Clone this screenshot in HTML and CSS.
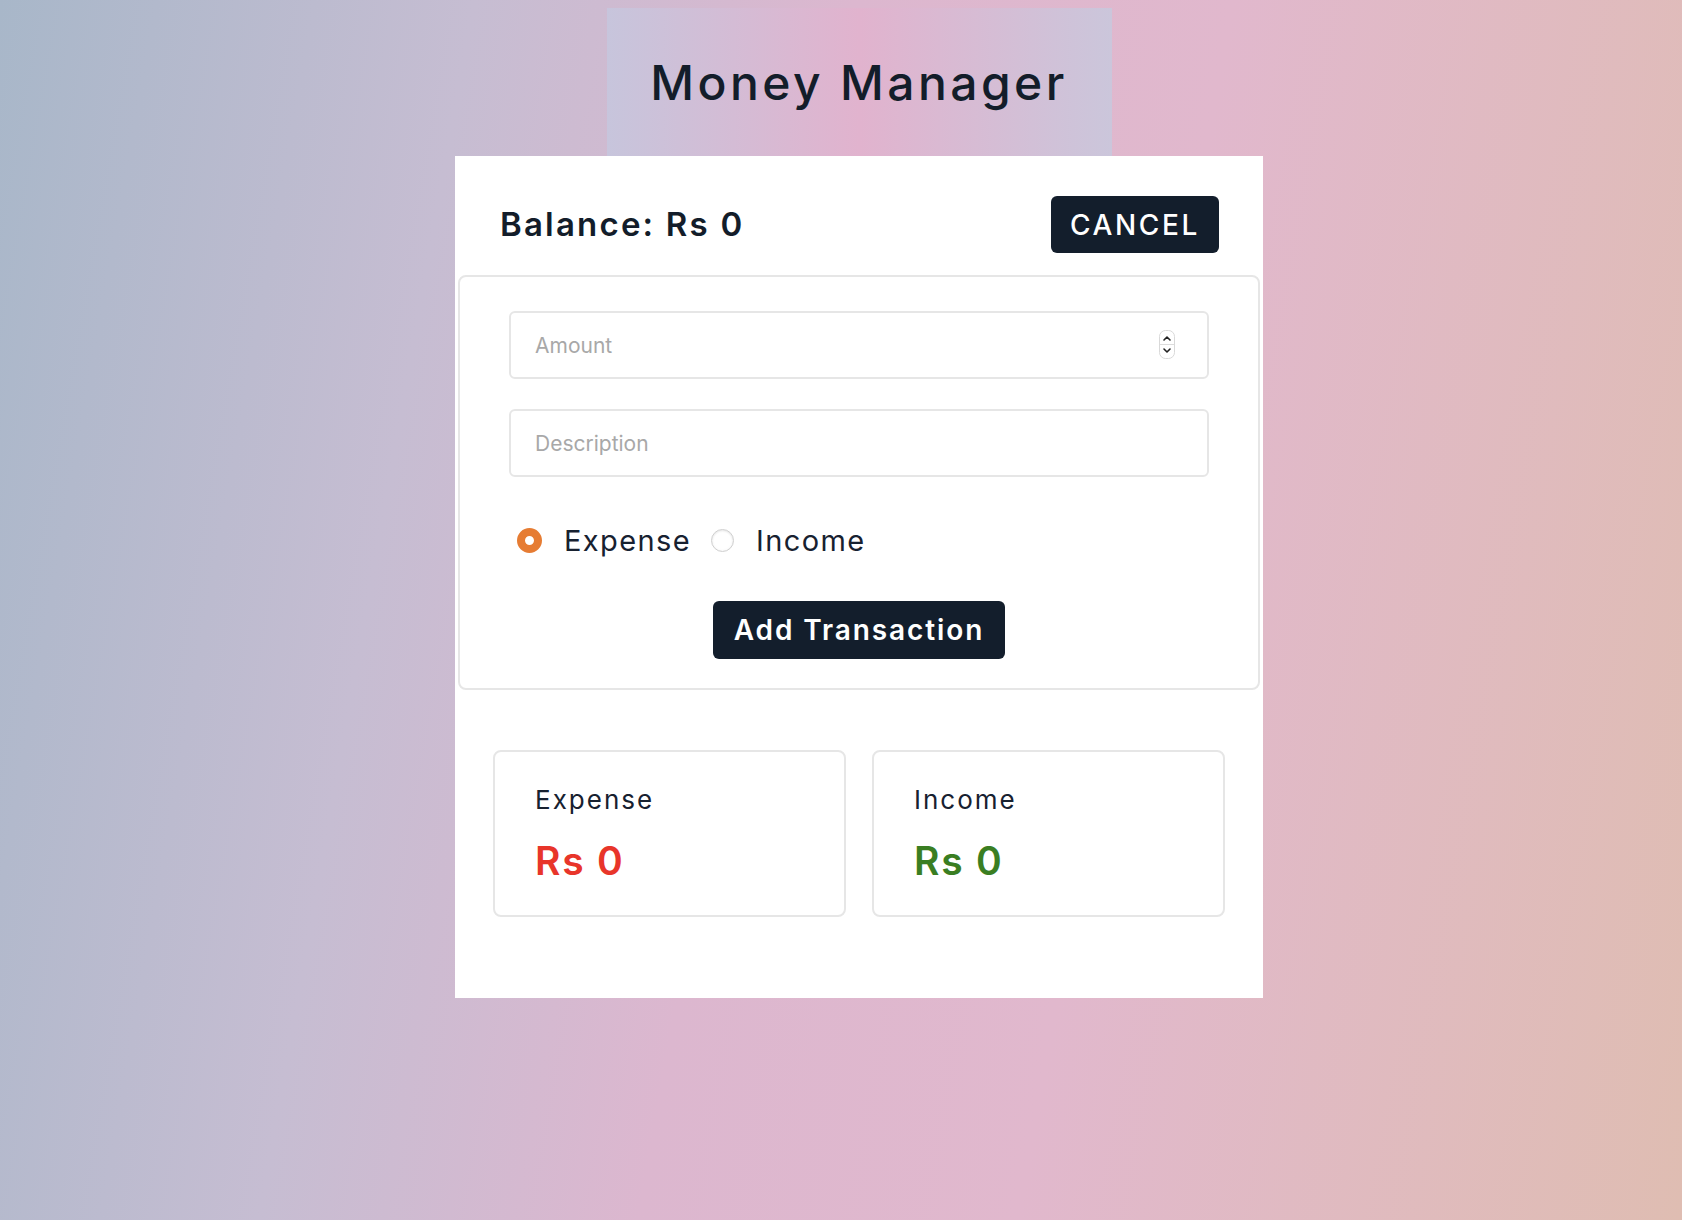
FILE: index.html
```html
<!DOCTYPE html>
<html lang="en">
<head>
<meta charset="utf-8">
<title>Money Manager</title>
<link rel="stylesheet" href="styles.css">
</head>
<body>
<div class="page">
  <header class="header">
    <h1 class="title">Money Manager</h1>
  </header>
  <main class="card">
    <div class="balance-row">
      <h2 class="balance">Balance: Rs 0</h2>
      <button class="btn btn-cancel">CANCEL</button>
    </div>
    <form class="form-box">
      <div class="field">
        <input class="input" type="text" placeholder="Amount">
        <span class="spinner">
          <svg width="16" height="29" viewBox="0 0 16 29">
            <rect x="0.5" y="0.5" width="15" height="28" rx="6" fill="#fff" stroke="#d9d9d9"/>
            <line x1="1" y1="14.5" x2="15" y2="14.5" stroke="#dcdcdc"/>
            <path d="M5 10 L8 7 L11 10" fill="none" stroke="#222" stroke-width="1.6" stroke-linecap="round" stroke-linejoin="round"/>
            <path d="M5 19 L8 22 L11 19" fill="none" stroke="#222" stroke-width="1.6" stroke-linecap="round" stroke-linejoin="round"/>
          </svg>
        </span>
      </div>
      <div class="field">
        <input class="input" type="text" placeholder="Description">
      </div>
      <div class="radio-row">
        <label class="radio-label"><span class="radio radio-checked"></span><span class="radio-text">Expense</span></label>
        <label class="radio-label"><span class="radio"></span><span class="radio-text">Income</span></label>
      </div>
      <button type="button" class="btn btn-add">Add Transaction</button>
    </form>
    <section class="summary">
      <div class="summary-card">
        <p class="summary-label">Expense</p>
        <p class="summary-value expense">Rs 0</p>
      </div>
      <div class="summary-card">
        <p class="summary-label">Income</p>
        <p class="summary-value income">Rs 0</p>
      </div>
    </section>
  </main>
</div>
</body>
</html>
```
FILE: styles.css
```css
html {
  min-height: 100%;
  background: linear-gradient(100deg, #a8b7c9 0%, #c6bdd2 25%, #dcb7cf 45%, #e1b8cd 65%, #dfbdb2 100%);
}
body {
  margin: 8px;
  font-family: Inter, "Open Sans", sans-serif;
  color: #172130;
}
.page {
  display: flex;
  flex-direction: column;
  align-items: center;
  padding-left: 36px;
}
.header {
  width: 505px;
  height: 148px;
  display: flex;
  align-items: center;
  justify-content: center;
  background: linear-gradient(to right, #c7c5dc 0%, #e1b3ce 50%, #cbc6db 100%);
}
.title {
  margin: 0;
  font-size: 48px;
  font-weight: 500;
  letter-spacing: 3.4px;
  color: #131d2a;
}
.card {
  width: 808px;
  box-sizing: border-box;
  background: #fff;
  padding: 40px 3px 81px;
}
.balance-row {
  display: flex;
  justify-content: space-between;
  align-items: center;
  padding: 0 41px 0 42px;
  margin-bottom: 22px;
}
.balance {
  margin: 0;
  font-size: 33px;
  font-weight: 600;
  letter-spacing: 2.2px;
  color: #131d2a;
  position: relative;
  top: -1px;
}
.btn {
  font-family: Inter, "Open Sans", sans-serif;
  background: #131e2c;
  color: #fff;
  border: none;
  border-radius: 6px;
  cursor: pointer;
}
.btn-cancel {
  width: 168px;
  height: 57px;
  font-size: 28px;
  font-weight: 500;
  letter-spacing: 2.6px;
  padding: 0;
}
.form-box {
  margin: 0;
  border: 2px solid #e6e6e6;
  border-radius: 8px;
  padding: 34px 0 29px;
  display: flex;
  flex-direction: column;
  align-items: center;
}
.field {
  position: relative;
  width: 700px;
  margin-bottom: 30px;
}
.field:nth-child(2) {
  margin-bottom: 0;
}
.input {
  display: block;
  width: 100%;
  height: 68px;
  box-sizing: border-box;
  border: 2px solid #e6e6e6;
  border-radius: 6px;
  padding: 0 24px;
  font-family: Inter, "Open Sans", sans-serif;
  font-size: 21px;
  outline: none;
}
.input::placeholder {
  color: #a8a8a8;
}
.spinner {
  position: absolute;
  right: 34px;
  top: 19px;
  width: 16px;
  height: 29px;
  display: block;
}
.spinner svg {
  display: block;
}
.radio-row {
  width: 700px;
  height: 50px;
  margin-top: 38px;
  margin-bottom: 2px;
  padding-left: 8px;
  box-sizing: border-box;
  display: flex;
  align-items: center;
  gap: 20px;
}
.radio-label {
  display: flex;
  align-items: center;
  gap: 22px;
}
.radio {
  width: 23px;
  height: 23px;
  box-sizing: border-box;
  border-radius: 50%;
  border: 1px solid #cfcfcf;
  background: radial-gradient(circle, #ffffff 55%, #f1f1f1 100%);
  box-shadow: inset 0 1px 2px rgba(0, 0, 0, 0.08);
}
.radio-checked {
  width: 25px;
  height: 25px;
  border: 8.5px solid #e67c33;
  background: #fff;
  box-shadow: none;
}
.radio-text {
  font-size: 29px;
  font-weight: 400;
  letter-spacing: 1.4px;
  color: #172130;
}
.btn-add {
  margin-top: 34px;
  height: 58px;
  width: 292px;
  padding: 0;
  font-size: 28px;
  font-weight: 600;
  letter-spacing: 1.9px;
}
.summary {
  display: flex;
  justify-content: center;
  gap: 26px;
  margin-top: 60px;
}
.summary-card {
  width: 353px;
  height: 167px;
  box-sizing: border-box;
  border: 2px solid #e6e6e6;
  border-radius: 8px;
  padding: 31px 40px 0;
}
.summary-label {
  margin: 0;
  height: 34px;
  line-height: 34px;
  font-size: 26px;
  font-weight: 400;
  letter-spacing: 2px;
  color: #172130;
}
.summary-value {
  margin: 22px 0 0;
  height: 44px;
  line-height: 44px;
  font-size: 39px;
  font-weight: 600;
  letter-spacing: 1.8px;
}
.expense {
  color: #e8352a;
}
.income {
  color: #3a7e22;
}
```
